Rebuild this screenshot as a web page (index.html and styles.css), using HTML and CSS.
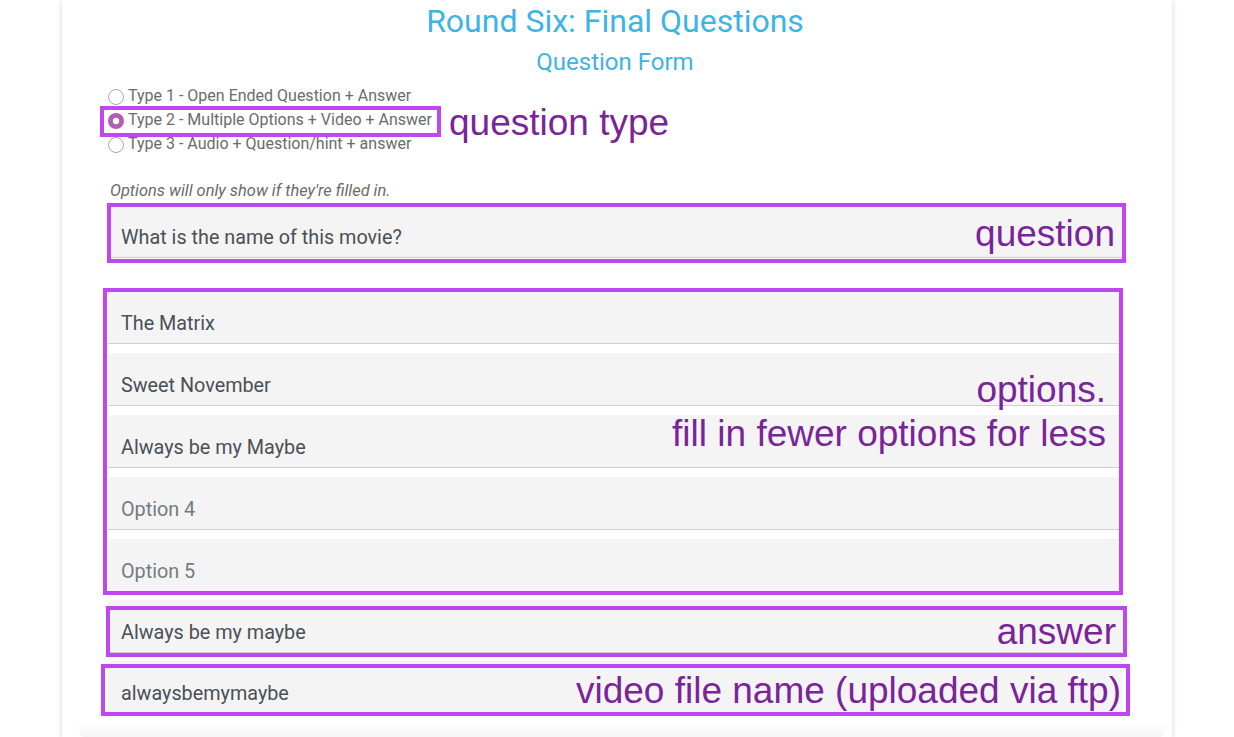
FILE: index.html
```html
<!DOCTYPE html>
<html lang="en">
<head>
<meta charset="utf-8">
<title>Round Six: Final Questions</title>
<link rel="stylesheet" href="styles.css">
</head>
<body>
<div class="card">
  <h1 class="title">Round Six: Final Questions</h1>
  <h2 class="subtitle">Question Form</h2>
  <div class="types">
    <label class="type"><input type="radio" name="qtype" class="radio"><span>Type 1 - Open Ended Question + Answer</span></label>
    <label class="type"><input type="radio" name="qtype" class="radio" checked><span>Type 2 - Multiple Options + Video + Answer</span></label>
    <label class="type"><input type="radio" name="qtype" class="radio"><span>Type 3 - Audio + Question/hint + answer</span></label>
  </div>
  <p class="note">Options will only show if they're filled in.</p>

  <input class="field field-question" type="text" value="What is the name of this movie?">

  <div class="options">
    <input class="field" type="text" value="The Matrix">
    <input class="field" type="text" value="Sweet November">
    <input class="field" type="text" value="Always be my Maybe">
    <input class="field" type="text" placeholder="Option 4">
    <input class="field" type="text" placeholder="Option 5">
  </div>

  <input class="field field-answer" type="text" value="Always be my maybe">
  <input class="field field-video" type="text" value="alwaysbemymaybe">
  <div class="panel-foot"></div>

  <div class="annot box-type"></div>
  <div class="annot-label label-type">question type</div>
  <div class="annot box-question"><span class="annot-text">question</span></div>
  <div class="annot box-options">
    <div class="annot-lines">
      <span class="annot-text">options.</span>
      <span class="annot-text">fill in fewer options for less</span>
    </div>
  </div>
  <div class="annot box-answer"><span class="annot-text">answer</span></div>
  <div class="annot box-video"><span class="annot-text">video file name (uploaded via ftp)</span></div>
</div>
</body>
</html>
```

FILE: styles.css
```css
html, body {
  margin: 0;
  padding: 0;
  background: #ffffff;
  overflow: hidden;
}

body {
  font-family: Roboto, "Liberation Sans", Arial, sans-serif;
}

.card {
  position: relative;
  width: 1110px;
  box-sizing: border-box;
  min-height: 737px;
  margin: 0 auto;
  padding: 3px 50px 0 46px;
  background: #ffffff;
  box-shadow: 0 0 6px rgba(0, 0, 0, 0.16);
  display: flex;
  flex-direction: column;
}

.title {
  margin: 0;
  font-size: 32px;
  line-height: 36px;
  font-weight: 400;
  color: #3db4e4;
  text-align: center;
}

.subtitle {
  margin: 9px 0 0;
  font-size: 24px;
  line-height: 28px;
  font-weight: 400;
  color: #3db4e4;
  text-align: center;
}

.types {
  margin-top: 8px;
  display: flex;
  flex-direction: column;
}

.type {
  display: flex;
  align-items: center;
  height: 24px;
  font-size: 16px;
  color: #6b6b6b;
}

.type span {
  position: relative;
  top: -1px;
}

.radio {
  appearance: none;
  -webkit-appearance: none;
  width: 16px;
  height: 16px;
  margin: 2px 4px 0 0;
  border: 1px solid #a8a8a8;
  border-radius: 50%;
  background: #ffffff;
  box-sizing: border-box;
  flex: none;
}

.radio:checked {
  border: none;
  background: radial-gradient(circle, #ffffff 0 3px, #b45db8 3.6px);
}

.note {
  margin: 25px 0 0 2px;
  font-size: 16.4px;
  line-height: 20px;
  font-style: italic;
  color: #6b6b6b;
}

.field {
  display: block;
  width: 100%;
  height: 53px;
  box-sizing: border-box;
  margin: 0;
  padding: 21px 13px 8px;
  border: none;
  border-bottom: 1px solid #cfcfcf;
  border-radius: 4px 4px 0 0;
  background: #f4f4f4;
  font-family: Roboto, "Liberation Sans", Arial, sans-serif;
  font-size: 19.8px;
  line-height: 23px;
  color: #495057;
  outline: none;
}

.field::placeholder {
  color: #737b83;
  opacity: 1;
}

.field-question {
  margin-top: 4px;
}

.options {
  margin-top: 33px;
  display: flex;
  flex-direction: column;
  gap: 9px;
}

.field-answer {
  margin-top: 8px;
}

.field-video {
  margin-top: 8px;
}

.panel-foot {
  margin: 9px -44px 0 -30px;
  height: 16px;
  border-radius: 0 0 12px 12px;
  background: linear-gradient(to bottom, rgba(0, 0, 0, 0) 0%, rgba(0, 0, 0, 0.045) 100%);
}

/* annotation overlays */
.annot {
  position: absolute;
  box-sizing: border-box;
  border: 4px solid #c046f0;
  display: flex;
  align-items: center;
  justify-content: flex-end;
}

.annot-text,
.annot-label {
  font-family: "Liberation Sans", Arial, Helvetica, sans-serif;
  font-size: 37px;
  line-height: 1;
  color: #7a2499;
  white-space: nowrap;
}

.annot-label {
  position: absolute;
}

.box-type {
  left: 38px;
  top: 106px;
  width: 341px;
  height: 31px;
}

.label-type {
  left: 387px;
  top: 104px;
}

.box-question {
  left: 45px;
  top: 203px;
  width: 1019px;
  height: 60px;
  padding-right: 7px;
}

.box-options {
  left: 41px;
  top: 288px;
  width: 1020px;
  height: 307px;
  align-items: flex-start;
  padding: 76px 13px 0 0;
}

.annot-lines {
  display: flex;
  flex-direction: column;
  align-items: flex-end;
}

.annot-lines .annot-text {
  line-height: 44px;
}

.box-answer {
  left: 44px;
  top: 606px;
  width: 1021px;
  height: 51px;
  padding-right: 7px;
}

.box-video {
  left: 39px;
  top: 664px;
  width: 1029px;
  height: 52px;
  padding-right: 5px;
}
```
